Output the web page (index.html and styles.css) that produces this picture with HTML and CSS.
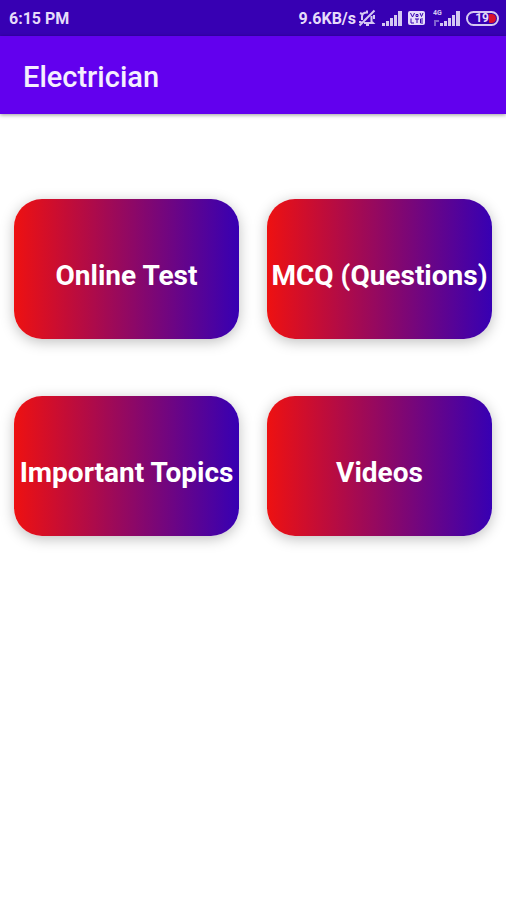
FILE: index.html
```html
<!DOCTYPE html>
<html lang="en">
<head>
    <meta charset="UTF-8">
    <meta name="viewport" content="width=device-width, initial-scale=1.0">
    <title>Electrician</title>
    <link rel="stylesheet" href="styles.css">
</head>
<body>
    <div class="status-bar">
        <span class="time">6:15 PM</span>
        <div class="status-icons">
            <span class="speed">9.6KB/s</span>
            <!-- muted bell -->
            <svg class="bell" width="18" height="18" viewBox="0 0 18 18">
                <path d="M4 11V7.500C4 5 6 3.500 9 3.500h1 M13.500 7v5.500l1.500 1.500H6 M8 16h3 M9 3V1.500 M1.500 16.500L16.500 1.500 M1 13h2.500 M2 4l2 1 M16 6v4"/>
            </svg>
            <svg class="signal" width="20" height="16" viewBox="0 0 20 16">
                <path d="M0 13h3v3H0z M4 11h3v5H4z M8 8h3v8H8z M12 5h3v11h-3z M16 1h4v15h-4z"/>
            </svg>
            <svg class="volte" width="17" height="16" viewBox="0 0 17 16">
                <rect x="0" y="1" width="17" height="14" rx="2"/>
                <path d="M2.500 3l2 4 2-4 M8 4.500h2v2H8z M12 3l1.500 3.500L15 3 M3 8.500V13h3 M7 9h4 M9 9v4 M15 9h-2.500v4H15 M12.500 11H15"/>
            </svg>
            <svg class="signal signal-4g" width="27" height="18" viewBox="0 0 27 18">
                <path d="M7 14h3v3H7z M11 12h3v5h-3z M15 9h3v8h-3z M19 6h3v11h-3z M23 2h4v15h-4z"/>
                <path class="faint" d="M1 11h3v2H3v4H1z M4 11h2v2H4z"/>
                <text x="0" y="6">4G</text>
            </svg>
            <div class="battery">19<span class="level"></span></div>
        </div>
    </div>
    <header class="app-bar">
        <h1>Electrician</h1>
    </header>
    <main class="menu">
        <button class="card">Online Test</button>
        <button class="card">MCQ (Questions)</button>
        <button class="card">Important Topics</button>
        <button class="card">Videos</button>
    </main>
</body>
</html>
```

FILE: styles.css
```css
* {
    box-sizing: border-box;
}
body {
    margin: 0;
    background-color: white;
    font-family: Roboto, sans-serif;
}
.status-bar {
    display: flex;
    justify-content: space-between;
    align-items: center;
    height: 36px;
    padding: 0 7px 0 9px;
    background-color: #3700b3;
    color: #e6dcfa;
    font-size: 16px;
    font-weight: 700;
}
.status-icons {
    display: flex;
    align-items: center;
    gap: 6px;
}
.speed {
    margin-right: -4px;
}
.bell {
    fill: none;
    stroke: #d5c8f2;
    stroke-width: 2;
}
.signal {
    fill: #d5c8f2;
}
.signal-4g {
    margin-left: 2px;
}
.signal text {
    font-size: 7px;
    font-weight: 700;
}
.signal .faint {
    fill: #8063cf;
}
.volte rect {
    fill: #e6dcfa;
}
.volte path {
    fill: none;
    stroke: #3700b3;
    stroke-width: 1;
}
.battery {
    display: flex;
    justify-content: flex-end;
    align-items: center;
    width: 33px;
    height: 15px;
    padding-right: 1px;
    border: 2px solid #d5c8f2;
    border-radius: 8px;
    font-size: 12px;
    line-height: 12px;
}
.level {
    width: 7px;
    height: 9px;
    border-radius: 1px 5px 5px 1px;
    background-color: #d8102c;
}
.app-bar {
    display: flex;
    align-items: center;
    height: 78px;
    padding: 4px 23px 0;
    background-color: #6200ee;
    box-shadow: 0 1px 4px rgba(0, 0, 0, 0.4);
}
h1 {
    margin: 0;
    color: #f5effe;
    font-size: 29px;
    font-weight: 500;
}
.menu {
    display: grid;
    grid-template-columns: 1fr 1fr;
    gap: 57px 28px;
    padding: 85px 14px;
}
.card {
    height: 140px;
    padding: 12px 0 0;
    border: none;
    border-radius: 28px;
    background: linear-gradient(to right, #ee1111, #3700b3);
    box-shadow: 0 3px 14px rgba(0, 0, 0, 0.25);
    color: white;
    font-family: inherit;
    font-size: 28px;
    font-weight: 700;
    white-space: nowrap;
    cursor: pointer;
}
```
